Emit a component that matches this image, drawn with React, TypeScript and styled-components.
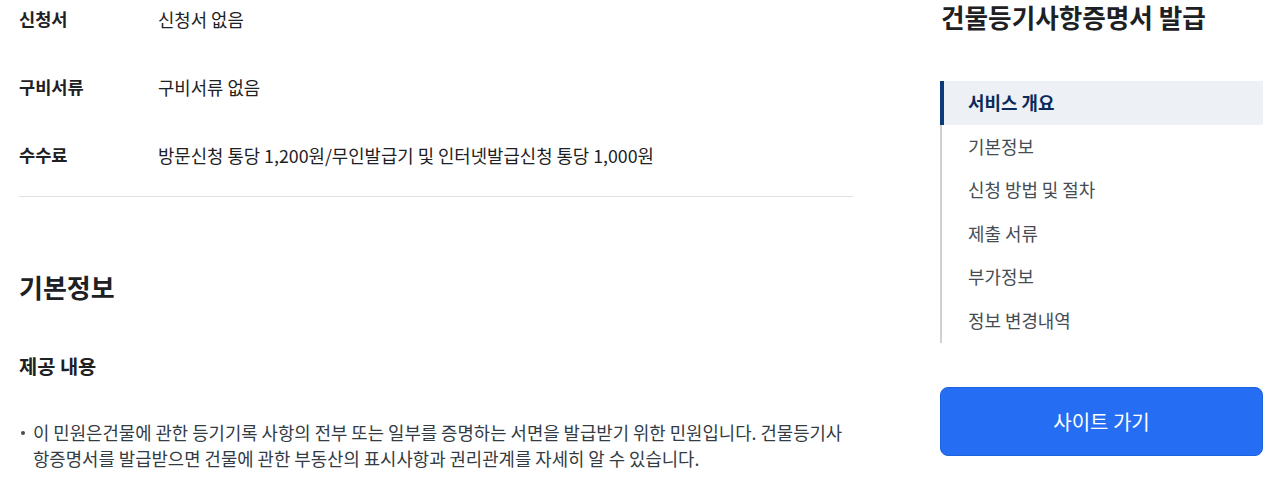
import React from 'react';
import styled, { createGlobalStyle } from 'styled-components';

const GlobalStyle = createGlobalStyle`
    html, body {
        margin: 0;
        padding: 0;
        background: #ffffff;
    }
    body {
        font-family: "Noto Sans CJK KR", "Noto Sans", sans-serif;
        color: #1e2124;
    }
`;

const PageLayout = styled.div`
    display: flex;
    align-items: flex-start;
    gap: 87px;
    padding: 0 17px 0 19px;
    width: 1280px;
    box-sizing: border-box;
`;

const MainColumn = styled.div`
    width: 834px;
    flex-shrink: 0;
`;

const InfoTable = styled.dl`
    margin: 0;
    padding: 6px 0 28px;
    display: flex;
    flex-direction: column;
    gap: 42px;
    border-bottom: 1px solid #dfe1e4;
`;

const InfoRow = styled.div`
    display: grid;
    grid-template-columns: 139px 1fr;
    line-height: 26px;
`;

const InfoLabel = styled.dt`
    font-size: 17.6px;
    font-weight: 700;
    color: #1e2124;
`;

const InfoValue = styled.dd`
    margin: 0;
    font-size: 17.8px;
    color: #1e2124;
`;

const SectionTitle = styled.h2`
    margin: 73px 0 0;
    font-size: 26px;
    line-height: 34px;
    font-weight: 700;
    color: #1e2124;
`;

const SubTitle = styled.h3`
    margin: 49px 0 0;
    font-size: 19.8px;
    line-height: 26px;
    font-weight: 700;
    color: #1e2124;
`;

const BulletList = styled.ul`
    margin: 40px 0 0;
    padding: 0;
    list-style: none;
`;

const BulletItem = styled.li`
    position: relative;
    padding-left: 14px;
    font-size: 17.8px;
    line-height: 26px;
    color: #333b44;

    &::before {
        content: '';
        position: absolute;
        left: 2px;
        top: 12px;
        width: 4px;
        height: 4px;
        border-radius: 50%;
        background: #464c53;
    }
`;

const Sidebar = styled.aside`
    width: 323px;
    flex-shrink: 0;
`;

const SidebarTitle = styled.h1`
    margin: 0;
    padding-left: 1px;
    font-size: 25.6px;
    line-height: 34px;
    font-weight: 700;
    color: #1e2124;
`;

const NavList = styled.ul`
    margin: 47px 0 0;
    padding: 0;
    list-style: none;
    border-left: 2px solid #cdd1d5;
`;

const NavItem = styled.li<{ $active?: boolean }>`
    position: relative;
    padding: 10px 0 10px 26px;
    font-size: 17.9px;
    line-height: 23.6px;
    color: ${p => (p.$active ? '#0b2a5b' : '#464c53')};
    font-weight: ${p => (p.$active ? 700 : 400)};
    background: ${p => (p.$active ? '#edf1f6' : 'transparent')};

    &::before {
        content: '';
        position: absolute;
        left: -2px;
        top: 0;
        bottom: 0;
        width: 4px;
        background: ${p => (p.$active ? '#0b3b7a' : 'transparent')};
    }
`;

const SiteButton = styled.a`
    display: flex;
    align-items: center;
    justify-content: center;
    margin-top: 44px;
    height: 69px;
    border-radius: 8px;
    background: #256ef4;
    border: 1px solid #1d63e0;
    box-sizing: border-box;
    color: #ffffff;
    font-size: 20px;
    text-decoration: none;
`;

const infoRows = [
    { label: '신청서', value: '신청서 없음' },
    { label: '구비서류', value: '구비서류 없음' },
    { label: '수수료', value: '방문신청 통당 1,200원/무인발급기 및 인터넷발급신청 통당 1,000원' },
];

const navItems = ['서비스 개요', '기본정보', '신청 방법 및 절차', '제출 서류', '부가정보', '정보 변경내역'];

const App = () => {
    return (
        <>
            <GlobalStyle />
            <PageLayout>
                <MainColumn>
                    <InfoTable>
                        {infoRows.map(row => (
                            <InfoRow key={row.label}>
                                <InfoLabel>{row.label}</InfoLabel>
                                <InfoValue>{row.value}</InfoValue>
                            </InfoRow>
                        ))}
                    </InfoTable>
                    <SectionTitle>{'기본정보'}</SectionTitle>
                    <SubTitle>{'제공 내용'}</SubTitle>
                    <BulletList>
                        <BulletItem>
                            {'이 민원은건물에 관한 등기기록 사항의 전부 또는 일부를 증명하는 서면을 발급받기 위한 민원입니다. 건물등기사항증명서를 발급받으면 건물에 관한 부동산의 표시사항과 권리관계를 자세히 알 수 있습니다.'}
                        </BulletItem>
                    </BulletList>
                </MainColumn>
                <Sidebar>
                    <SidebarTitle>{'건물등기사항증명서 발급'}</SidebarTitle>
                    <NavList>
                        {navItems.map((item, i) => (
                            <NavItem key={item} $active={i === 0}>{item}</NavItem>
                        ))}
                    </NavList>
                    <SiteButton href={'#'}>{'사이트 가기'}</SiteButton>
                </Sidebar>
            </PageLayout>
        </>
    );
};

export default App;
